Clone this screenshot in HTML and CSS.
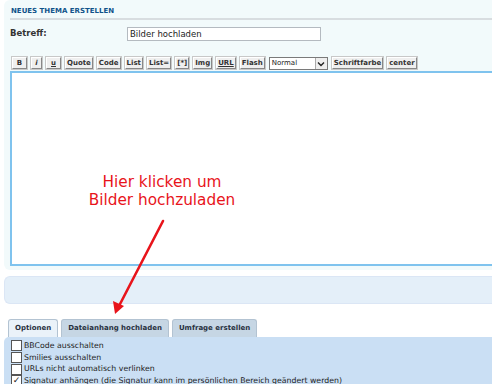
FILE: index.html
```html
<!DOCTYPE html>
<html lang="de">
<head>
  <meta charset="UTF-8" />
  <title>Neues Thema erstellen</title>
  <link rel="stylesheet" href="styles.css">
</head>
<body>
  <div class="page">
    <div class="panel post">
      <h3>Neues Thema erstellen</h3>
      <div class="subject-row">
        <label class="subject-label">Betreff:</label>
        <div class="subject-input">Bilder hochladen</div>
      </div>
      <div class="toolbar">
        <button class="bb wide">B</button>
        <button class="bb italic">i</button>
        <button class="bb under wide">u</button>
        <button class="bb">Quote</button>
        <button class="bb">Code</button>
        <button class="bb">List</button>
        <button class="bb">List=</button>
        <button class="bb">[*]</button>
        <button class="bb">Img</button>
        <button class="bb under">URL</button>
        <button class="bb">Flash</button>
        <div class="size-select">
          <span class="size-value">Normal</span>
          <span class="size-arrow">
            <svg width="8" height="6" viewBox="0 0 8 6"><path d="M1 1.5 L4 4.5 L7 1.5" fill="none" stroke="#222" stroke-width="1.4"/></svg>
          </span>
        </div>
        <button class="bb">Schriftfarbe</button>
        <button class="bb">center</button>
      </div>
      <div class="editor"></div>
    </div>

    <div class="panel smilies"></div>

    <div class="tabs">
      <span class="tab active">Optionen</span>
      <span class="tab">Dateianhang hochladen</span>
      <span class="tab">Umfrage erstellen</span>
    </div>
    <div class="options">
      <div class="opt"><span class="box"></span>BBCode ausschalten</div>
      <div class="opt"><span class="box"></span>Smilies ausschalten</div>
      <div class="opt"><span class="box"></span>URLs nicht automatisch verlinken</div>
      <div class="opt"><span class="box checked">✓</span>Signatur anhängen (die Signatur kann im persönlichen Bereich geändert werden)</div>
    </div>
  </div>

  <div class="note">Hier klicken um<br>Bilder hochzuladen</div>
  <svg class="arrow" width="492" height="384" viewBox="0 0 492 384">
    <line x1="163" y1="221" x2="119" y2="306" stroke="#e8141b" stroke-width="2.6" stroke-linecap="round"/>
    <path d="M115 314 L113 301 L124 306 Z" fill="#e8141b"/>
  </svg>
</body>
</html>
```

FILE: styles.css
```css
body {
  margin: 0;
  background: #fff;
  font-family: "DejaVu Sans", Verdana, sans-serif;
  color: #222;
  overflow: hidden;
  height: 384px;
  position: relative;
}
.page {
  padding: 0 0 0 4px;
}
.panel {
  border-radius: 6px 0 0 6px;
}
.post {
  background: #f2fafb;
  padding: 6px 0 4px 6px;
}
h3 {
  margin: 0;
  font-size: 7px;
  line-height: 10px;
  font-weight: bold;
  text-transform: uppercase;
  color: #105289;
  padding: 0 0 2px 1px;
  border-bottom: 2px solid #d8dde0;
}
.subject-row {
  display: flex;
  margin-top: 7px;
}
.subject-label {
  width: 117px;
  font-size: 8.5px;
  font-weight: bold;
  color: #333;
  padding-top: 1px;
}
.subject-input {
  width: 190px;
  height: 12px;
  border: 1px solid #b4bac0;
  background: #fff;
  font-size: 8.5px;
  line-height: 12px;
  padding: 0 0 0 2px;
  color: #222;
}
.toolbar {
  display: flex;
  gap: 4px;
  margin: 16px 0 2px 2px;
  height: 12px;
}
.bb {
  font-family: "DejaVu Sans", Verdana, sans-serif;
  font-size: 7px;
  font-weight: bold;
  color: #333;
  height: 12px;
  padding: 0 1px;
  background: #efefef;
  border: 1px solid;
  border-color: #fff #888 #888 #fff;
  box-shadow: 0 0 0 1px #c8c8c8;
  line-height: 10px;
}
.wide {
  min-width: 15px;
}
.italic {
  font-style: italic;
  min-width: 11px;
}
.under {
  text-decoration: underline;
}
.size-select {
  display: flex;
  width: 57px;
  height: 11px;
  border: 1px solid #7a7a7a;
  background: #fff;
  font-size: 7px;
  line-height: 11px;
}
.size-value {
  flex: 1;
  padding-left: 2px;
}
.size-arrow {
  width: 11px;
  display: flex;
  align-items: center;
  justify-content: center;
  background: #eee;
  border-left: 1px solid #aaa;
}
.editor {
  width: 500px;
  height: 191px;
  background: #fff;
  border: 2px solid #7fc3ee;
  border-right: none;
}
.smilies {
  margin-top: 6px;
  height: 28px;
  background: #e4eff9;
  border: 1px solid #dbe6f5;
  border-right: none;
  box-sizing: border-box;
}
.tabs {
  display: flex;
  gap: 3px;
  margin: 15px 0 0 4px;
}
.tab {
  font-size: 7px;
  font-weight: bold;
  color: #28313f;
  background: #c6d6e4;
  border: 1px solid #b3c3d2;
  border-bottom: none;
  border-radius: 3px 3px 0 0;
  padding: 0 6px;
  height: 17px;
  line-height: 17px;
}
.tab.active {
  background: #eaf2f9;
  padding: 0 6px;
}
.options {
  background: #cadff4;
  border-radius: 5px 0 0 0;
  padding: 3px 0 0 7px;
  height: 60px;
}
.opt {
  display: flex;
  align-items: center;
  font-size: 7.8px;
  line-height: 11.7px;
  color: #222;
}
.box {
  width: 9px;
  height: 9px;
  border: 1px solid #555;
  background: #fff;
  margin-right: 2px;
  font-size: 9px;
  line-height: 9px;
  font-weight: bold;
  text-align: center;
}
.note {
  position: absolute;
  left: 62px;
  top: 173px;
  width: 200px;
  text-align: center;
  color: #e8141b;
  font-size: 15.3px;
  line-height: 18px;
}
.arrow {
  position: absolute;
  left: 0;
  top: 0;
}
```
